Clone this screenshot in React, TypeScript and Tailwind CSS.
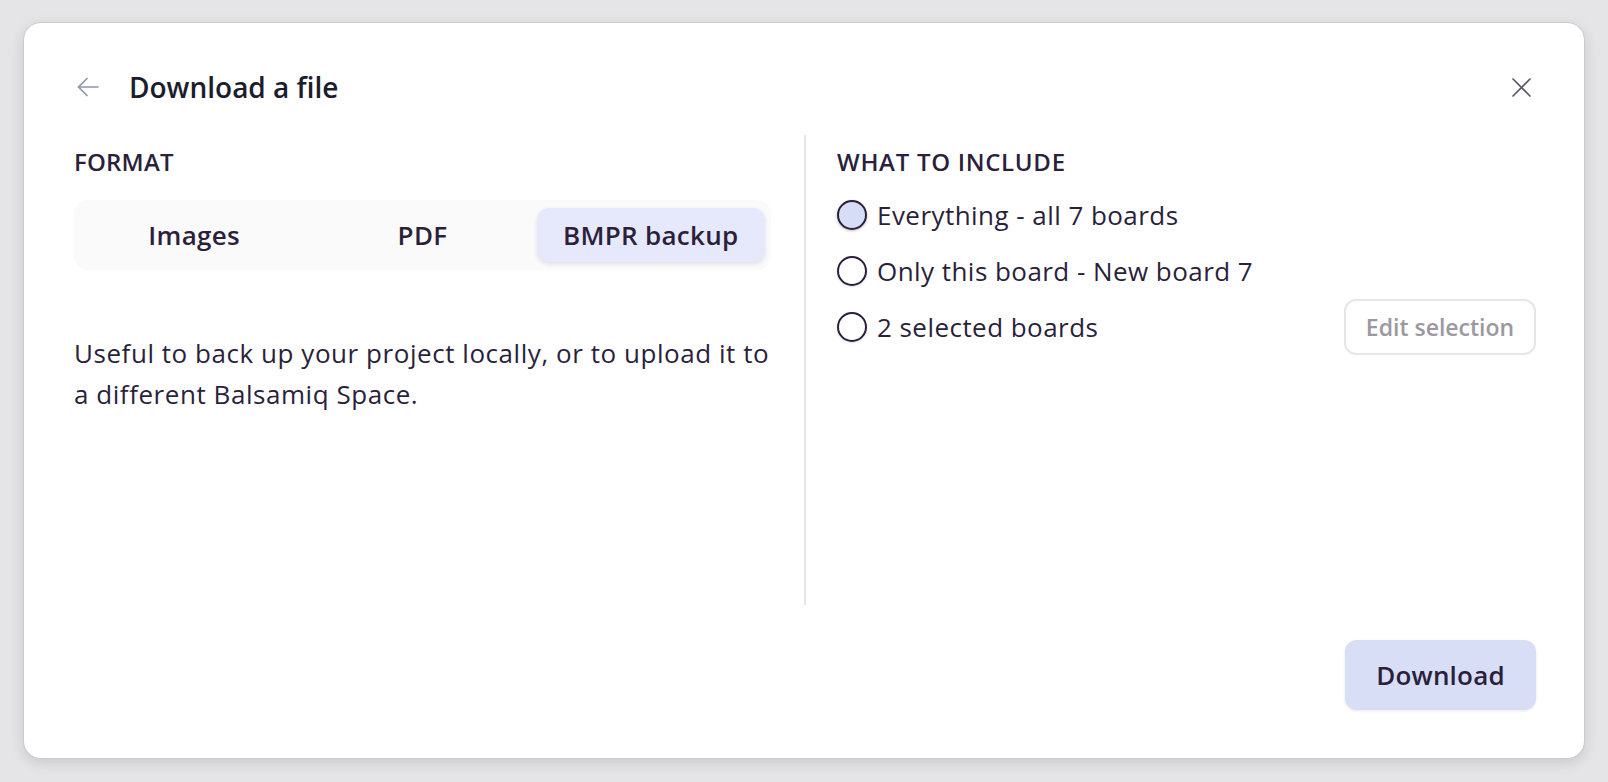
import { useState } from "react"

const font = { fontFamily: '"Open Sans", "Noto Sans", sans-serif' }

const tabs = [
  { id: "images", label: "Images" },
  { id: "pdf", label: "PDF" },
  { id: "bmpr", label: "BMPR backup" },
]

const options = [
  { id: "all", label: "Everything - all 7 boards" },
  { id: "one", label: "Only this board - New board 7" },
  { id: "sel", label: "2 selected boards" },
]

export default function App() {
  const [format, setFormat] = useState("bmpr")
  const [include, setInclude] = useState("all")

  return (
    <div className="w-full h-[782px] bg-[#e5e5e8] px-[23px] pt-[22px] text-[#2b1f3c]" style={font}>
      <div className="h-[737px] bg-white rounded-[18px] border border-[#cdc9ce] shadow-[0_4px_14px_rgba(0,0,0,0.12)] flex flex-col pl-[50px] pr-[48px] pt-[49px] pb-[48px]">
        {/* Header */}
        <header className="flex items-center h-[30px]">
          <button className="ml-[3px] w-[22px] h-[22px] flex items-center justify-center text-[#8e96ad]">
            <svg width="22" height="20" viewBox="0 0 22 20" fill="none" stroke="currentColor" strokeWidth="1.7" strokeLinecap="round" strokeLinejoin="round">
              <path d="M21 10H1.5" />
              <path d="M10 1.5L1.5 10l8.5 8.5" />
            </svg>
          </button>
          <h1 className="ml-[30px] text-[28px] leading-[30px] font-semibold text-[#1b1d2e]">Download a file</h1>
          <button className="ml-auto mr-[5px] text-[#5f5668]">
            <svg width="19" height="19" viewBox="0 0 19 19" fill="none" stroke="currentColor" strokeWidth="1.7" strokeLinecap="round">
              <path d="M1 1l17 17M18 1L1 18" />
            </svg>
          </button>
        </header>

        {/* Body */}
        <div className="flex mt-[33px] h-[470px]">
          <section className="w-[697px] pt-[12px]">
            <h2 className="text-[24px] leading-[30px] font-semibold tracking-[0.2px]">FORMAT</h2>
            <div className="mt-[23px] h-[70px] bg-[#fafafb] rounded-[14px] flex items-center px-[6px]">
              {tabs.map(t => (
                <button
                  key={t.id}
                  onClick={() => setFormat(t.id)}
                  className={
                    format === t.id
                      ? "flex-1 h-[54px] rounded-[12px] bg-[#e6e8fc] shadow-[0_2px_4px_rgba(60,60,120,0.14)] text-[26px] font-semibold tracking-[0.3px]"
                      : "flex-1 h-[54px] rounded-[12px] text-[26px] font-semibold tracking-[0.3px]"
                  }
                >
                  {t.label}
                </button>
              ))}
            </div>
            <p className="mt-[63px] text-[26px] leading-[41px] tracking-[0.55px]">
              Useful to back up your project locally, or to upload it to a different Balsamiq Space.
            </p>
          </section>

          <div className="w-[2px] bg-[#e3e6f0] ml-[33px] mr-[31px]" />

          <section className="flex-1 pt-[12px]">
            <h2 className="text-[24px] leading-[30px] font-semibold tracking-[0.7px]">WHAT TO INCLUDE</h2>
            <div className="mt-[22px] flex flex-col gap-[24px]">
              {options.map(o => (
                <div key={o.id} className="flex items-center h-[32px]">
                  <button onClick={() => setInclude(o.id)} className="flex items-center gap-[10px]">
                    <span
                      className={
                        include === o.id
                          ? "w-[30px] h-[30px] rounded-full border-2 border-[#2b1f3c] bg-[#d6ddf6] shadow-[0_1px_3px_rgba(0,0,0,0.25)]"
                          : "w-[30px] h-[30px] rounded-full border-2 border-[#2b1f3c] bg-white shadow-[0_1px_2px_rgba(0,0,0,0.12)]"
                      }
                    />
                    <span className="text-[26px] leading-[32px] tracking-[0.45px]">{o.label}</span>
                  </button>
                  {o.id === "sel" && (
                    <button className="ml-auto h-[56px] w-[192px] rounded-[12px] border-2 border-[#e6e5e8] text-[23px] font-semibold text-[#9c98a2]">
                      Edit selection
                    </button>
                  )}
                </div>
              ))}
            </div>
          </section>
        </div>

        {/* Footer */}
        <footer className="mt-auto flex justify-end">
          <button className="h-[70px] w-[191px] rounded-[12px] bg-[#d7def6] shadow-[0_1px_3px_rgba(0,0,0,0.1)] text-[26px] font-semibold tracking-[0.2px]">
            Download
          </button>
        </footer>
      </div>
    </div>
  )
}
